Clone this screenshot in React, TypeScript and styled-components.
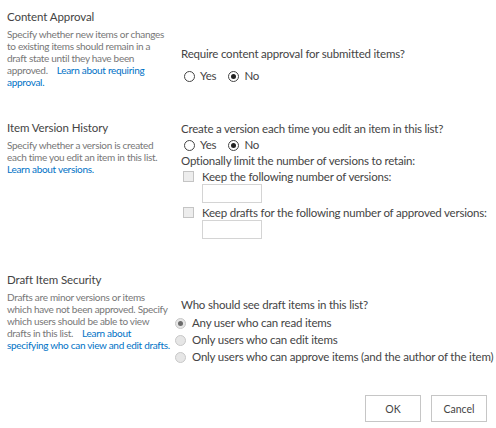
import React from "react";
import styled, { createGlobalStyle } from "styled-components";

const Global = createGlobalStyle`
  html, body { margin: 0; padding: 0; background: #fff; }
  body { font-family: Lato, "Open Sans", sans-serif; color: #444; }
`;

const Page = styled.div`
  width: 496px;
  padding: 8px 7px 0 7px;
  box-sizing: border-box;
`;

const Section = styled.div<{ $gap: number }>`
  display: grid;
  grid-template-columns: 174px 1fr;
  margin-bottom: ${(p) => p.$gap}px;
`;

const Left = styled.div`
  width: 166px;
`;

const Title = styled.div`
  font-size: 11.5px;
  letter-spacing: -0.1px;
  line-height: 17px;
  color: #444;
  margin-bottom: 3px;
`;

const Desc = styled.div`
  font-size: 10px;
  letter-spacing: -0.3px;
  line-height: 12px;
  color: #777;
  white-space: nowrap;
`;

const Link = styled.a`
  color: #0072c6;
  text-decoration: none;
`;

const Right = styled.div<{ $top: number }>`
  padding-top: ${(p) => p.$top}px;
  display: flex;
  flex-direction: column;
`;

const Text = styled.div`
  font-size: 11.5px;
  letter-spacing: -0.2px;
  line-height: 16px;
  color: #444;
`;

const RadioRow = styled.div<{ $mt?: number }>`
  display: flex;
  align-items: center;
  gap: 12px;
  height: 16px;
  margin-top: ${(p) => p.$mt ?? 7}px;
  padding-left: 3px;
`;

const Option = styled.label`
  display: flex;
  align-items: center;
  gap: 5px;
  font-size: 11.5px;
  letter-spacing: -0.2px;
  line-height: 16px;
  color: #444;
  white-space: nowrap;
`;

const Radio = styled.span<{ $checked?: boolean; $soft?: boolean }>`
  width: 11px;
  height: 11px;
  box-sizing: border-box;
  border-radius: 50%;
  border: 1px solid ${(p) => (p.$soft ? "#c8c8c8" : "#444")};
  background: ${(p) => (p.$soft ? "#e6e6e6" : "#fff")};
  display: flex;
  align-items: center;
  justify-content: center;
  flex: none;
  &::after {
    content: "";
    display: ${(p) => (p.$checked ? "block" : "none")};
    width: 5px;
    height: 5px;
    border-radius: 50%;
    background: ${(p) => (p.$soft ? "#6b6b6b" : "#222")};
  }
`;

const OptionList = styled.div`
  display: flex;
  flex-direction: column;
  gap: 1px;
  margin-top: 2px;
  margin-left: -6px;
  & > label {
    gap: 6px;
  }
`;

const Check = styled.span`
  width: 11px;
  height: 11px;
  box-sizing: border-box;
  border: 1px solid #c4c4c4;
  background: #ededed;
  flex: none;
`;

const CheckRow = styled.label<{ $mt?: number }>`
  display: flex;
  align-items: center;
  gap: 8px;
  font-size: 11.5px;
  letter-spacing: -0.2px;
  line-height: 15px;
  color: #444;
  padding-left: 2px;
  margin-top: ${(p) => p.$mt ?? 0}px;
  white-space: nowrap;
`;

const NumberBox = styled.input`
  width: 60px;
  height: 19px;
  box-sizing: border-box;
  border: 1px solid #d4d4d4;
  background: #fff;
  margin: 0 0 0 21px;
  padding: 0;
  outline: none;
`;

const Buttons = styled.div`
  display: flex;
  justify-content: flex-end;
  gap: 10px;
  padding-right: 2px;
`;

const Button = styled.button`
  width: 56px;
  height: 27px;
  box-sizing: border-box;
  border: 1px solid #c6c6c6;
  background: #fff;
  font-family: Lato, "Open Sans", sans-serif;
  font-size: 10.5px;
  color: #444;
  padding: 0;
`;

export default function App() {
  return (
    <Page>
      <Global />
      <Section $gap={31}>
        <Left>
          <Title>Content Approval</Title>
          <Desc>
            Specify whether new items or changes
            <br />
            to existing items should remain in a
            <br />
            draft state until they have been
            <br />
            approved.&nbsp;&nbsp;&nbsp; <Link>Learn about requiring</Link>
            <br />
            <Link>approval.</Link>
          </Desc>
        </Left>
        <Right $top={38}>
          <Text>Require content approval for submitted items?</Text>
          <RadioRow $mt={6}>
            <Option>
              <Radio /> Yes
            </Option>
            <Option>
              <Radio $checked /> No
            </Option>
          </RadioRow>
        </Right>
      </Section>

      <Section $gap={32}>
        <Left>
          <Title>Item Version History</Title>
          <Desc>
            Specify whether a version is created
            <br />
            each time you edit an item in this list.
            <br />
            <Link>Learn about versions.</Link>
          </Desc>
        </Left>
        <Right $top={2}>
          <Text>Create a version each time you edit an item in this list?</Text>
          <RadioRow $mt={0}>
            <Option>
              <Radio /> Yes
            </Option>
            <Option>
              <Radio $checked /> No
            </Option>
          </RadioRow>
          <Text>Optionally limit the number of versions to retain:</Text>
          <CheckRow>
            <Check /> Keep the following number of versions:
          </CheckRow>
          <NumberBox />
          <CheckRow $mt={2}>
            <Check /> Keep drafts for the following number of approved versions:
          </CheckRow>
          <NumberBox />
        </Right>
      </Section>

      <Section $gap={30}>
        <Left>
          <Title>Draft Item Security</Title>
          <Desc>
            Drafts are minor versions or items
            <br />
            which have not been approved. Specify
            <br />
            which users should be able to view
            <br />
            drafts in this list.&nbsp;&nbsp;&nbsp; <Link>Learn about</Link>
            <br />
            <Link>specifying who can view and edit drafts.</Link>
          </Desc>
        </Left>
        <Right $top={26}>
          <Text>Who should see draft items in this list?</Text>
          <OptionList>
            <Option>
              <Radio $soft $checked /> Any user who can read items
            </Option>
            <Option>
              <Radio $soft /> Only users who can edit items
            </Option>
            <Option>
              <Radio $soft /> Only users who can approve items (and the author of the item)
            </Option>
          </OptionList>
        </Right>
      </Section>

      <Buttons>
        <Button>OK</Button>
        <Button>Cancel</Button>
      </Buttons>
    </Page>
  );
}
